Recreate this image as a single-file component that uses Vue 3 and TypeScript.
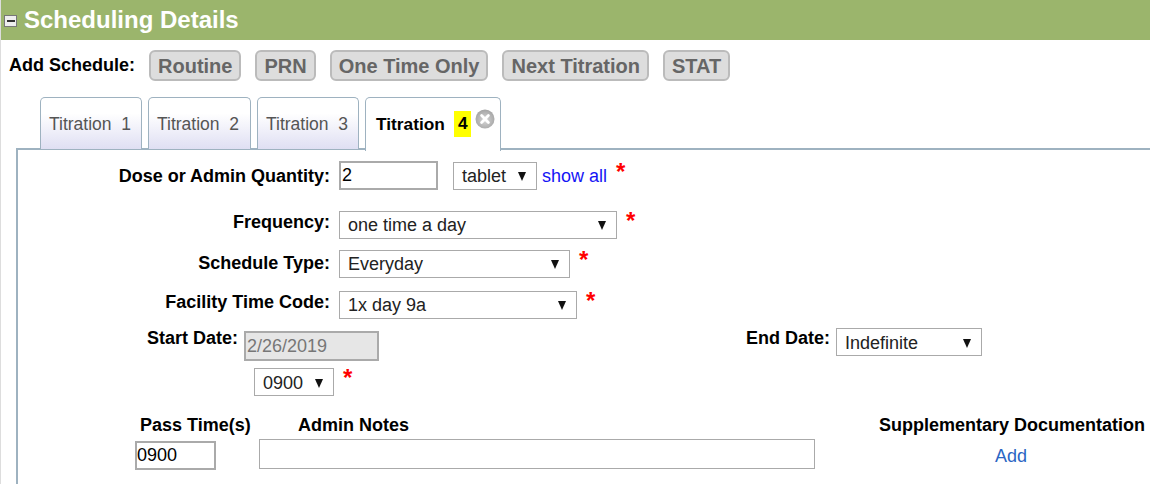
<script setup lang="ts">
const scheduleButtons = ['Routine', 'PRN', 'One Time Only', 'Next Titration', 'STAT'];
const tabs = [1, 2, 3];
</script>

<template>
  <div class="page">
    <div class="header">
      <span class="collapse"><i></i></span>
      <h1>Scheduling Details</h1>
    </div>

    <div class="add-row">
      <b class="add-label">Add Schedule:</b>
      <button v-for="b in scheduleButtons" :key="b" class="sched-btn" type="button">{{ b }}</button>
    </div>

    <div class="tabs">
      <div v-for="t in tabs" :key="t" class="tab">Titration&nbsp;&nbsp;{{ t }}</div>
      <div class="tab active">
        Titration&nbsp;&nbsp;<mark>4</mark>
        <svg class="close" width="20" height="20" viewBox="0 0 20 20">
          <defs>
            <radialGradient id="closeFill" cx="50%" cy="55%" r="55%">
              <stop offset="0%" stop-color="#d8d8d8" />
              <stop offset="100%" stop-color="#a4a4a4" />
            </radialGradient>
          </defs>
          <circle cx="10" cy="10" r="9.5" fill="url(#closeFill)" />
          <path d="M6.6 6.6l6.8 6.8M13.4 6.6l-6.8 6.8" stroke="#fff" stroke-width="2.8" stroke-linecap="round" />
        </svg>
      </div>
    </div>

    <div class="panel">
      <div class="row dose-row">
        <label>Dose or Admin Quantity:</label>
        <input class="text-input dose" value="2" />
        <span class="select tablet">tablet<i class="arrow"></i></span>
        <a class="show-all">show all</a>
        <span class="req">*</span>
      </div>
      <div class="row freq-row">
        <label>Frequency:</label>
        <span class="select freq">one time a day<i class="arrow"></i></span>
        <span class="req">*</span>
      </div>
      <div class="row type-row">
        <label>Schedule Type:</label>
        <span class="select sched">Everyday<i class="arrow"></i></span>
        <span class="req">*</span>
      </div>
      <div class="row code-row">
        <label>Facility Time Code:</label>
        <span class="select code">1x day 9a<i class="arrow"></i></span>
        <span class="req">*</span>
      </div>

      <div class="dates">
        <div class="start">
          <div class="start-top">
            <label>Start Date:</label>
            <input class="text-input date" value="2/26/2019" disabled />
          </div>
          <div class="start-time">
            <span class="select time">0900<i class="arrow"></i></span>
            <span class="req">*</span>
          </div>
        </div>
        <div class="end">
          <label>End Date:</label>
          <span class="select indefinite">Indefinite<i class="arrow"></i></span>
        </div>
      </div>

      <div class="times">
        <div class="col pass">
          <b>Pass Time(s)</b>
          <input class="text-input pass-input" value="0900" />
        </div>
        <div class="col notes">
          <b>Admin Notes</b>
          <input class="notes-input" />
        </div>
        <div class="col supp">
          <b>Supplementary Documentation</b>
          <a class="add-link">Add</a>
        </div>
      </div>
    </div>
  </div>
</template>

<style scoped>
.page {
  width: 1150px;
  height: 484px;
  overflow: hidden;
  font-family: "Liberation Sans", Arial, sans-serif;
  font-size: 18px;
  color: #000;
  background: #fff;
  border-left: 1px solid #ddd;
  box-sizing: border-box;
}

.header {
  height: 40px;
  background: #9bb56c;
  display: flex;
  align-items: center;
  padding-left: 3px;
}
.collapse {
  width: 11px;
  height: 10px;
  background: #eee;
  border: 1px solid #777;
  display: flex;
  align-items: center;
  justify-content: center;
  margin-right: 7px;
  margin-top: 2px;
}
.collapse i {
  display: block;
  width: 8px;
  height: 2px;
  background: #333;
}
h1 {
  margin: 0;
  font-size: 24px;
  font-weight: bold;
  color: #fff;
}

.add-row {
  display: flex;
  align-items: center;
  height: 31px;
  margin-top: 10px;
  padding-left: 8px;
}
.add-label {
  margin-right: 14px;
}
.sched-btn {
  height: 31px;
  padding: 1px 7px 0;
  margin-right: 14px;
  border: 2px solid #bbb;
  border-radius: 6px;
  background: #ddd;
  color: #666;
  font-family: inherit;
  font-size: 20px;
  font-weight: bold;
}

.tabs {
  display: flex;
  align-items: flex-start;
  gap: 6px;
  margin-top: 16px;
  padding-left: 39px;
  height: 51px;
}
.tab {
  box-sizing: border-box;
  width: 102px;
  height: 52px;
  padding: 16px 0 0 8px;
  border: 1px solid #9eb2c0;
  border-bottom: none;
  border-radius: 5px 5px 0 0;
  background: linear-gradient(#fff 30%, #dfdff3);
  color: #555;
  font-size: 17.5px;
  line-height: 20px;
  white-space: nowrap;
}
.tab:nth-child(2) {
  width: 103px;
}
.tab.active {
  position: relative;
  z-index: 1;
  width: 136px;
  height: 54px;
  padding-left: 10px;
  background: #fff;
  color: #000;
  font-weight: bold;
  font-size: 17.3px;
}
mark {
  display: inline-block;
  background: #ff0;
  width: 17px;
  height: 26px;
  line-height: 24px;
  margin-top: -3px;
  text-align: center;
  vertical-align: top;
}
.close {
  position: absolute;
  left: 109px;
  top: 11px;
}

.panel {
  margin-left: 15px;
  height: 340px;
  box-sizing: border-box;
  border-left: 2px solid #9eb2c0;
  border-top: 2px solid #9eb2c0;
}

.row {
  display: flex;
  align-items: center;
  height: 29px;
}
.row label {
  width: 312px;
  text-align: right;
  margin-right: 9px;
  flex-shrink: 0;
}
label, .col b {
  font-weight: bold;
}
.dose-row { margin-top: 11px; }
.freq-row { margin-top: 20px; }
.type-row { margin-top: 10px; }
.code-row { margin-top: 12px; }
.freq-row label, .code-row label {
  position: relative;
  top: -2px;
}
.dose-row label {
  position: relative;
  top: 1px;
}

.text-input {
  box-sizing: border-box;
  border: 2px solid #aaa;
  padding: 0 1px;
  font-family: inherit;
  font-size: 18px;
  color: #000;
  background: #fff;
  outline: none;
}
.dose {
  width: 99px;
  height: 29px;
  margin-right: 15px;
}

.select {
  box-sizing: border-box;
  display: flex;
  align-items: center;
  justify-content: space-between;
  height: 28px;
  padding: 2px 10px 0 8px;
  border: 1px solid #aaa;
  background: #fff;
  color: #222;
  flex-shrink: 0;
}
.arrow {
  width: 0;
  height: 0;
  border-left: 4.5px solid transparent;
  border-right: 4.5px solid transparent;
  border-top: 9px solid #111;
}
.tablet { width: 84px; }
.freq { width: 278px; }
.sched { width: 231px; }
.code { width: 238px; }
.indefinite { width: 146px; }
.time { width: 80px; }

.show-all {
  color: #1414f5;
  margin-left: 5px;
  position: relative;
  top: 1px;
}
.req {
  color: #f00;
  font-size: 24px;
  font-weight: bold;
  line-height: 24px;
  height: 24px;
  margin-left: 9px;
  align-self: flex-start;
  margin-top: -1px;
}

.dates {
  display: flex;
  margin-top: 12px;
  align-items: flex-start;
}
.start {
  width: 728px;
}
.start-top {
  display: flex;
  align-items: flex-start;
}
.start-top label {
  margin-left: 129px;
  margin-right: 6px;
  line-height: 18px;
  margin-top: -2px;
}
.date {
  width: 135px;
  height: 30px;
  background: #e6e6e6;
  color: #777;
  padding-left: 1px;
}
.start-time {
  display: flex;
  margin-top: 7px;
  margin-left: 236px;
}
.start-time .req {
  margin-top: -2px;
}
.end {
  display: flex;
  align-items: flex-start;
  margin-top: -3px;
}
.end label {
  margin-right: 6px;
  line-height: 18px;
  margin-top: 1px;
}

.times {
  display: flex;
  margin-top: 20px;
  align-items: flex-start;
}
.col {
  display: flex;
  flex-direction: column;
}
.col b {
  line-height: 18px;
  white-space: nowrap;
}
.pass {
  width: 241px;
  padding-left: 122px;
  box-sizing: border-box;
  align-items: flex-start;
  flex-shrink: 0;
}
.pass-input {
  width: 81px;
  height: 29px;
  margin-top: 7px;
  margin-left: -5px;
  padding: 0;
}
.notes {
  width: 620px;
  flex-shrink: 0;
}
.notes b {
  margin-left: 39px;
}
.notes-input {
  box-sizing: border-box;
  width: 556px;
  height: 30px;
  margin-top: 5px;
  border: 1px solid #aaa;
  outline: none;
}
.supp {
  flex-shrink: 0;
  align-items: center;
}
.add-link {
  color: #2a66c4;
  line-height: 18px;
  margin-top: 13px;
  margin-right: 2px;
}
</style>

<style>
html, body {
  margin: 0;
  overflow: hidden;
}
</style>
